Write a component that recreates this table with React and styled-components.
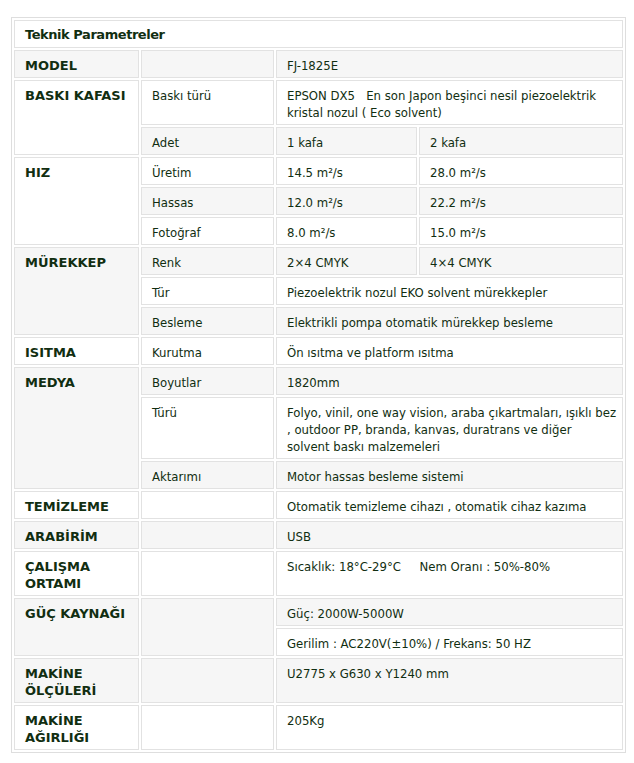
import React from "react";
import styled, { createGlobalStyle } from "styled-components";

const GlobalStyle = createGlobalStyle`
  html, body {
    margin: 0;
    padding: 0;
    background: #ffffff;
  }
`;

const Page = styled.div`
  padding: 17px 0 10px 11px;
  color: #112e11;
`;

const SpecTable = styled.table`
  width: 615px;
  table-layout: fixed;
  border-collapse: separate;
  border-spacing: 2px;
  border: 1px solid #dedede;
  color: #112e11;
`;

const Row = styled.tr`
  &:nth-child(even) > td {
    background: #f6f6f6;
  }
`;

// value / sub cells use the narrow face, labels the wide bold face
const Cell = styled.td`
  border: 1px solid #e2e2e2;
  padding: 6px 4px 3px 10px;
  vertical-align: top;
  text-align: left;
  background: #ffffff;
  font-family: "DejaVu Sans Condensed", "DejaVu Sans", Verdana, sans-serif;
  font-stretch: semi-condensed;
  font-size: 13px;
  line-height: 17px;
  font-weight: 400;
`;

const LabelCell = styled(Cell)`
  font-family: "DejaVu Sans", Verdana, sans-serif;
  font-stretch: normal;
  font-weight: 700;
`;

const TitleCell = styled(LabelCell)`
  padding-top: 5px;
  padding-bottom: 4px;
  letter-spacing: -0.45px;
`;

const nb = "\u00a0";

const groups = [
  { label: "MODEL", rows: [{ sub: "", vals: ["FJ-1825E"] }] },
  {
    label: "BASKI KAFASI",
    rows: [
      {
        sub: "Baskı türü",
        vals: [
          `EPSON DX5${nb}${nb} En son Japon beşinci nesil piezoelektrik kristal nozul ( Eco solvent)`,
        ],
      },
      { sub: "Adet", vals: ["1 kafa", "2 kafa"] },
    ],
  },
  {
    label: "HIZ",
    rows: [
      { sub: "Üretim", vals: ["14.5 m²/s", "28.0 m²/s"] },
      { sub: "Hassas", vals: ["12.0 m²/s", "22.2 m²/s"] },
      { sub: "Fotoğraf", vals: ["8.0 m²/s", "15.0 m²/s"] },
    ],
  },
  {
    label: "MÜREKKEP",
    rows: [
      { sub: "Renk", vals: ["2×4 CMYK", "4×4 CMYK"] },
      { sub: "Tür", vals: ["Piezoelektrik nozul EKO solvent mürekkepler"] },
      { sub: "Besleme", vals: ["Elektrikli pompa otomatik mürekkep besleme"] },
    ],
  },
  {
    label: "ISITMA",
    rows: [{ sub: "Kurutma", vals: ["Ön ısıtma ve platform ısıtma"] }],
  },
  {
    label: "MEDYA",
    rows: [
      { sub: "Boyutlar", vals: ["1820mm"] },
      {
        sub: "Türü",
        vals: [
          <>
            Folyo, vinil, one way vision, araba çıkartmaları, ışıklı bez ,
            outdoor PP, branda, kanvas, duratrans ve diğer
            <br />
            solvent baskı malzemeleri
          </>,
        ],
      },
      { sub: "Aktarımı", vals: ["Motor hassas besleme sistemi"] },
    ],
  },
  {
    label: "TEMİZLEME",
    rows: [{ sub: "", vals: ["Otomatik temizleme cihazı , otomatik cihaz kazıma"] }],
  },
  { label: "ARABİRİM", rows: [{ sub: "", vals: ["USB"] }] },
  {
    label: "ÇALIŞMA ORTAMI",
    rows: [
      {
        sub: "",
        vals: [`Sıcaklık: 18°C-29°C${nb}${nb}${nb}${nb} Nem Oranı : 50%-80%`],
      },
    ],
  },
  {
    label: "GÜÇ KAYNAĞI",
    mergeSub: true,
    rows: [
      { sub: "", vals: ["Güç: 2000W-5000W"] },
      { sub: "", vals: ["Gerilim : AC220V(±10%) / Frekans: 50 HZ"] },
    ],
  },
  { label: "MAKİNE ÖLÇÜLERİ", rows: [{ sub: "", vals: ["U2775 x G630 x Y1240 mm"] }] },
  { label: "MAKİNE AĞIRLIĞI", rows: [{ sub: "", vals: ["205Kg"] }] },
];

const App = () => {
  const body = [];
  groups.forEach((g) => {
    g.rows.forEach((r, i) => {
      body.push(
        <Row key={g.label + i}>
          {i === 0 && <LabelCell rowSpan={g.rows.length}>{g.label}</LabelCell>}
          {g.mergeSub ? (
            i === 0 && <Cell rowSpan={g.rows.length}>{r.sub}</Cell>
          ) : (
            <Cell>{r.sub}</Cell>
          )}
          {r.vals.length === 1 ? (
            <Cell colSpan={2}>{r.vals[0]}</Cell>
          ) : (
            r.vals.map((v) => <Cell key={v}>{v}</Cell>)
          )}
        </Row>
      );
    });
  });

  return (
    <>
      <GlobalStyle />
      <Page>
        <SpecTable>
          <colgroup>
            <col style={{ width: 125 }} />
            <col style={{ width: 133 }} />
            <col style={{ width: 141 }} />
            <col style={{ width: 204 }} />
          </colgroup>
          <tbody>
            <Row>
              <TitleCell colSpan={4}>Teknik Parametreler</TitleCell>
            </Row>
            {body}
          </tbody>
        </SpecTable>
      </Page>
    </>
  );
};

export default App;
